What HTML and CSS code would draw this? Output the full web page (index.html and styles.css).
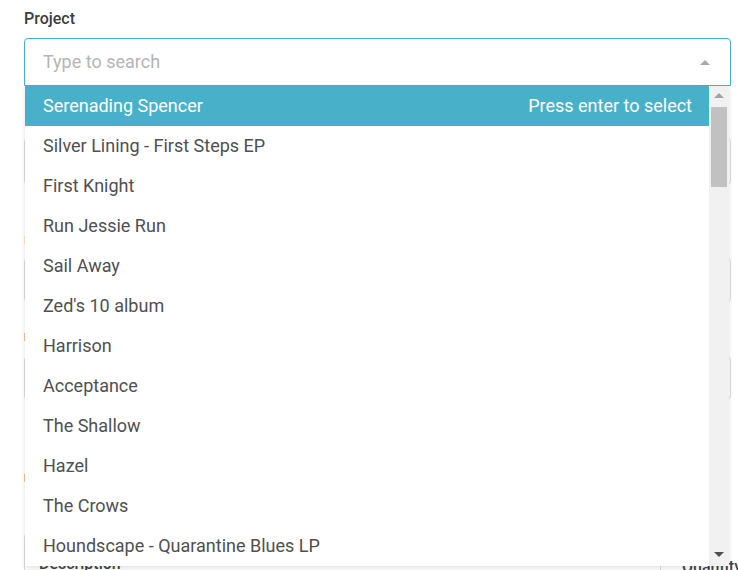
FILE: index.html
```html
<!DOCTYPE html>
<html>
<head>
<meta charset="utf-8">
<link rel="stylesheet" href="styles.css">
</head>
<body>
<div class="page">
  <div class="field">
    <label class="label">Project</label>
    <div class="select-wrap">
      <div class="select-input">
        <span class="placeholder">Type to search</span>
        <span class="caret"></span>
      </div>
      <div class="dropdown">
        <ul class="options">
          <li class="option active"><span>Serenading Spencer</span><span class="hint">Press enter to select</span></li>
          <li class="option">Silver Lining - First Steps EP</li>
          <li class="option">First Knight</li>
          <li class="option">Run Jessie Run</li>
          <li class="option">Sail Away</li>
          <li class="option">Zed's 10 album</li>
          <li class="option">Harrison</li>
          <li class="option">Acceptance</li>
          <li class="option">The Shallow</li>
          <li class="option">Hazel</li>
          <li class="option">The Crows</li>
          <li class="option">Houndscape - Quarantine Blues LP</li>
        </ul>
        <div class="scrollbar">
          <span class="arrow-up"></span>
          <div class="track"><div class="thumb"></div></div>
          <span class="arrow-down"></span>
        </div>
      </div>
    </div>
  </div>
  <div class="behind">
    <div class="b-input b1"></div>
    <div class="b-mark b-yellow m1"></div>
    <div class="b-input b2"><span class="b-arrow"></span></div>
    <div class="b-mark b-orange m2"></div>
    <div class="b-input b3"><span class="b-arrow"></span></div>
    <div class="b-mark b-orange m3"></div>
    <div class="b-row">
      <div class="b-area"><span class="b-text">Description</span></div>
      <span class="b-text b-qty">Quantity</span>
    </div>
  </div>
</div>
</body>
</html>
```
FILE: styles.css
```css
* { box-sizing: border-box; }
html, body { margin: 0; padding: 0; background: #fff; }
body { font-family: Roboto, "Noto Sans", sans-serif; width: 738px; height: 570px; overflow: hidden; }
.page { padding: 8px 7px 0 24px; position: relative; }
.label { display: block; font-size: 16px; font-weight: 500; color: #3d3d3d; height: 30px; line-height: 22px; }
.select-wrap { position: relative; z-index: 2; }
.select-input { height: 48px; border: 1px solid #47b1c9; border-radius: 4px 4px 0 0; display: flex; align-items: center; justify-content: space-between; padding: 0 20px 2px 18px; background: #fff; }
.placeholder { font-size: 18px; color: #b5b5b5; }
.caret { width: 0; height: 0; border-left: 5px solid transparent; border-right: 5px solid transparent; border-bottom: 5px solid #a8a8a8; margin-top: 2px; }
.dropdown { position: absolute; top: 48px; left: 1px; width: 704px; height: 480px; display: flex; background: #fff; box-shadow: 0 2px 5px rgba(0,0,0,0.12); }
.options { list-style: none; margin: 0; padding: 0; flex: 1; }
.option { height: 40px; display: flex; align-items: center; justify-content: space-between; padding: 0 17px 2px 18px; font-size: 18px; color: #505050; }
.option.active { background: #48b1c9; color: #fff; }
.scrollbar { width: 20px; background: #f1f1f1; display: flex; flex-direction: column; align-items: center; }
.arrow-up { margin-top: 7px; width: 0; height: 0; border-left: 5px solid transparent; border-right: 5px solid transparent; border-bottom: 5px solid #a3a3a3; }
.track { flex: 1; width: 100%; padding: 9px 2px 0 2px; }
.thumb { height: 80px; background: #c1c1c1; }
.arrow-down { margin-bottom: 9px; width: 0; height: 0; border-left: 5px solid transparent; border-right: 5px solid transparent; border-top: 5px solid #505050; }
.behind { position: relative; z-index: 1; margin-top: 52px; }
.b-input { border: 1px solid #dcdcdc; border-radius: 4px; position: relative; display: flex; align-items: center; justify-content: flex-end; padding-right: 22px; }
.b1 { height: 47px; }
.b2 { height: 44px; }
.b3 { height: 44px; }
.b-arrow { width: 0; height: 0; border-left: 4px solid transparent; border-right: 4px solid transparent; border-top: 4px solid #666; }
.b-mark { width: 3px; height: 8px; }
.b-yellow { background: #fbe9a8; }
.b-orange { background: #f6c08a; }
.m1 { margin: 51px 0 14px; }
.m2 { margin: 31px 0 15px; }
.m3 { margin: 74px 0 51px; }
.b-row { display: flex; align-items: flex-start; }
.b-area { flex: 1; height: 60px; border: 1px solid #dcdcdc; border-radius: 4px; padding: 20px 14px; }
.b-text { font-size: 16px; font-weight: 500; color: #444; }
.b-qty { padding: 24px 0 0 21px; width: 70px; }
```
